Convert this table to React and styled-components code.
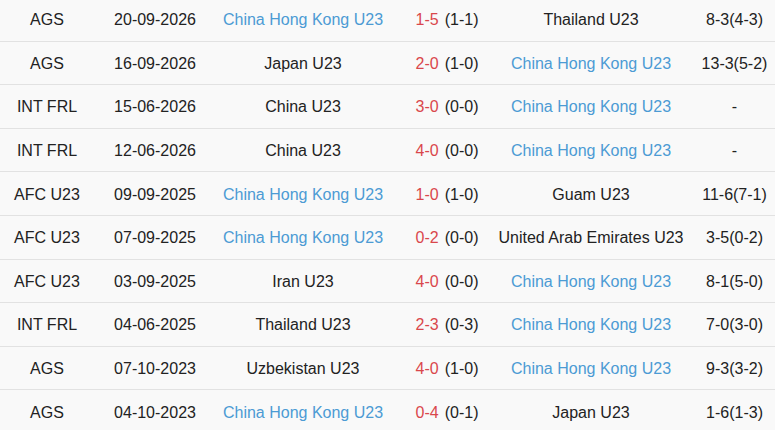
import React from 'react'
import styled, { createGlobalStyle } from 'styled-components'

const GlobalStyle = createGlobalStyle`
	html, body {
		margin: 0;
		padding: 0;
		background: #f9f9f9;
		overflow: hidden;
	}
`

const Table = styled('div')`
	width: 775px;
	margin-top: -2px;
	font-family: "Liberation Sans", Arial, sans-serif;
	font-size: 16px;
	color: #222;
	background: #f9f9f9;
`

const Row = styled('div')`
	display: grid;
	grid-template-columns: 94px 122px 174px 110px 182px 93px;
	height: 43.6px;
	box-sizing: border-box;
	padding-top: 2px;
	border-bottom: 1px solid #e2e2e2;
	align-items: center;
`

const Cell = styled('div')`
	display: flex;
	justify-content: center;
	white-space: nowrap;
	padding-left: ${p => p.$shift || 0}px;
`

const Team = styled(Cell)`
	color: ${p => (p.$own ? '#4c9bd4' : '#222')};
`

const Goals = styled('span')`
	color: #d9474c;
	margin-right: 6px;
`

const OWN = 'China Hong Kong U23'

const matches = [
	['AGS', '20-09-2026', OWN, '1-5', '(1-1)', 'Thailand U23', '8-3(4-3)'],
	['AGS', '16-09-2026', 'Japan U23', '2-0', '(1-0)', OWN, '13-3(5-2)'],
	['INT FRL', '15-06-2026', 'China U23', '3-0', '(0-0)', OWN, '-'],
	['INT FRL', '12-06-2026', 'China U23', '4-0', '(0-0)', OWN, '-'],
	['AFC U23', '09-09-2025', OWN, '1-0', '(1-0)', 'Guam U23', '11-6(7-1)'],
	['AFC U23', '07-09-2025', OWN, '0-2', '(0-0)', 'United Arab Emirates U23', '3-5(0-2)'],
	['AFC U23', '03-09-2025', 'Iran U23', '4-0', '(0-0)', OWN, '8-1(5-0)'],
	['INT FRL', '04-06-2025', 'Thailand U23', '2-3', '(0-3)', OWN, '7-0(3-0)'],
	['AGS', '07-10-2023', 'Uzbekistan U23', '4-0', '(1-0)', OWN, '9-3(3-2)'],
	['AGS', '04-10-2023', OWN, '0-4', '(0-1)', 'Japan U23', '1-6(1-3)']
]

export default function App() {
	return (
		<>
			<GlobalStyle />
			<Table>
				{matches.map(([league, date, home, score, half, away, corners], i) => (
					<Row key={i}>
						<Cell>{league}</Cell>
						<Cell>{date}</Cell>
						<Team $own={home === OWN}>{home}</Team>
						<Cell $shift={4}>
							<Goals>{score}</Goals>
							{half}
						</Cell>
						<Team $own={away === OWN}>{away}</Team>
						<Cell $shift={12}>{corners}</Cell>
					</Row>
				))}
			</Table>
		</>
	)
}
